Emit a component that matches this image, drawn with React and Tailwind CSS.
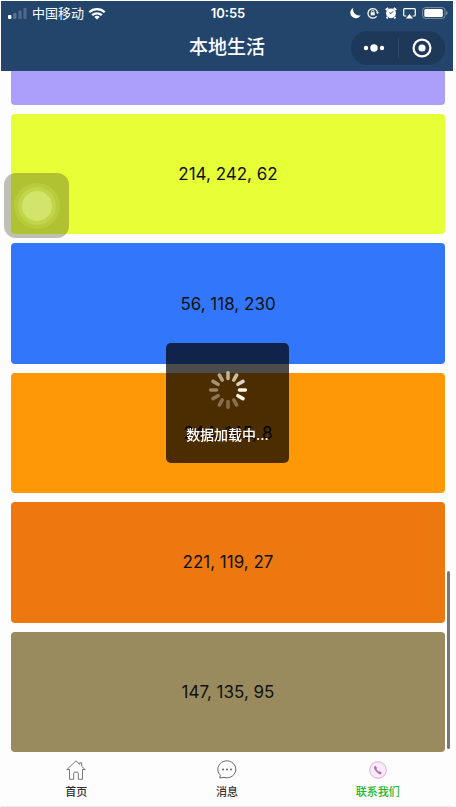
import React from "react";

const cards = [
  { label: "214, 242, 62", color: "bg-[#e7ff37]" },
  { label: "56, 118, 230", color: "bg-[#3277fb]" },
  { label: "244, 145, 8", color: "bg-[#ff9806]" },
  { label: "221, 119, 27", color: "bg-[#ee7810]" },
  { label: "147, 135, 95", color: "bg-[#998b5d]" },
];

function StatusBar() {
  return (
    <div className="grid h-6 grid-cols-3 items-center pl-[7px] pr-[5px] text-[13px] leading-6">
      <div className="flex items-center gap-1">
        <svg width="20" height="12" viewBox="0 0 20 12" fill="#fff" aria-hidden="true">
          <rect x="0" y="8" width="3.4" height="4" rx="1" />
          <rect x="5.2" y="6" width="3.2" height="6" rx="1" opacity=".25" />
          <rect x="10.4" y="3.5" width="3.2" height="8.500" rx="1" opacity=".2" />
          <rect x="15.400" y="1" width="3.2" height="11" rx="1" opacity=".2" />
        </svg>
        <span>中国移动</span>
        <svg width="18" height="13" viewBox="0 0 18 13" fill="none" stroke="#fff" strokeWidth="2.300" aria-hidden="true">
          <path d="M1.300 5.200a11 11 0 0 1 15.400 0" />
          <path d="M4.200 8.200a7 7 0 0 1 9.600 0" />
          <path d="M9 12.600 6.300 10a4 4 0 0 1 5.400 0Z" fill="#fff" stroke="none" />
        </svg>
      </div>
      <span className="text-center font-semibold">10:55</span>
      <div className="flex items-center justify-end gap-[6px]">
        <svg width="11" height="12" viewBox="0 0 11 12" fill="#fff" aria-hidden="true">
          <path d="M3.300.8A6 6 0 0 0 10.700 8.200 5.500 5.500 0 1 1 3.300.8Z" />
        </svg>
        <svg width="12" height="12" viewBox="0 0 12 12" fill="none" stroke="#fff" strokeWidth="1.200" aria-hidden="true">
          <path d="M9.600 9.300A4.800 4.800 0 1 1 10.600 6" />
          <path d="m9 5.200 1.600 1.900L12 5.200Z" fill="#fff" stroke="none" />
          <rect x="3.700" y="5.300" width="4" height="3" fill="#fff" stroke="none" />
          <path d="M4.500 5.500V4.500a1.200 1.200 0 0 1 2.400 0v1" strokeWidth="1" />
        </svg>
        <svg width="12" height="12" viewBox="0 0 12 12" aria-hidden="true">
          <circle cx="6" cy="6.300" r="4.900" fill="#fff" />
          <path d="M.8 3 3.200.9M11.200 3 8.800.9M2.600 10.200l-1 1.200M9.400 10.200l1 1.200" stroke="#fff" strokeWidth="1.900" />
          <path d="M8 4.300 6 6.700 4.300 5.600" fill="none" stroke="#23456b" strokeWidth="1" />
        </svg>
        <svg width="13" height="11" viewBox="0 0 13 11" fill="none" stroke="#fff" strokeWidth="1.200" aria-hidden="true">
          <path d="M3.400 8H1.700a1 1 0 0 1-1-1V1.700a1 1 0 0 1 1-1h9.600a1 1 0 0 1 1 1V7a1 1 0 0 1-1 1H9.600" />
          <path d="m6.500 6 3.500 4.600H3Z" fill="#fff" stroke="none" />
        </svg>
        <svg width="26" height="12" viewBox="0 0 26 12" aria-hidden="true">
          <rect x=".6" y=".6" width="22.500" height="10.800" rx="3" fill="none" stroke="#fff" strokeOpacity=".4" />
          <rect x="2.300" y="2" width="18.500" height="8" rx="1.500" fill="#fff" />
          <path d="M24.300 4v4q1.200-.7 1.200-2t-1.200-2Z" fill="#fff" opacity=".5" />
        </svg>
      </div>
    </div>
  );
}

function TitleBar() {
  return (
    <div className="grid h-[46px] grid-cols-[1fr_auto_1fr] items-center px-2">
      <h1 className="col-start-2 pb-px text-[19px] font-medium leading-6">本地生活</h1>
      <div className="flex h-[34px] w-[94px] items-center justify-self-end rounded-full bg-[#1d3858] ring-1 ring-inset ring-[#1e3b5f]">
        <button type="button" aria-label="更多" className="flex flex-1 justify-center">
          <svg width="22" height="10" viewBox="0 0 22 10" fill="#fff" aria-hidden="true">
            <circle cx="3" cy="5" r="2.200" />
            <circle cx="11" cy="5" r="3.700" />
            <circle cx="19" cy="5" r="2.200" />
          </svg>
        </button>
        <span className="h-5 w-px bg-[#2c4a6c]" />
        <button type="button" aria-label="关闭" className="flex flex-1 justify-center">
          <svg width="20" height="20" viewBox="0 0 20 20" aria-hidden="true">
            <circle cx="10" cy="10" r="8.400" fill="none" stroke="#fff" strokeWidth="2.300" />
            <circle cx="10" cy="10" r="3.600" fill="#fff" />
          </svg>
        </button>
      </div>
    </div>
  );
}

function HomeIcon() {
  return (
    <svg width="20" height="20" viewBox="0 0 20 20" fill="none" stroke="#777" strokeWidth="1" strokeLinejoin="round" strokeLinecap="round" aria-hidden="true">
      <path d="m1 9.500 9-8.700 3.700 3.500V2.800h2v3.500L19 9.500M1 9.500h2.500v9.800h4.200v-6q0-1.200 1.100-1.200h2.400q1.100 0 1.100 1.200v6h4.200V9.500H19" />
    </svg>
  );
}

function MessageIcon() {
  return (
    <svg width="20" height="20" viewBox="0 0 20 20" fill="none" stroke="#666" strokeWidth="1" aria-hidden="true">
      <path d="M3.300 15.200A9 8.500 0 1 1 7 17.400M3.300 15.200 2.800 18l4.200-.6" />
      <g fill="#555" stroke="none">
        <circle cx="6" cy="9.500" r=".9" />
        <circle cx="10" cy="9.500" r=".9" />
        <circle cx="14" cy="9.500" r=".9" />
      </g>
    </svg>
  );
}

function PhoneIcon() {
  return (
    <svg width="20" height="20" viewBox="0 0 20 20" aria-hidden="true">
      <circle cx="10" cy="10" r="8.300" fill="#fbeafa" stroke="#dcaedb" />
      <path d="M6.700 6.200 7.500 5.800 9 8.100 8.400 9.100q.9 1.800 2.500 2.700l1-.6 1.900 1.500-.6 1.300q-1.500.8-3.600-1Q6.300 10.300 6 8 6 6.800 6.700 6.200Z" fill="#ad70ae" />
    </svg>
  );
}

const tabs = [
  { label: "首页", Icon: HomeIcon, color: "text-[#333]" },
  { label: "消息", Icon: MessageIcon, color: "text-[#333]" },
  { label: "联系我们", Icon: PhoneIcon, color: "text-[#22b52e]" },
];

const spokeOpacity = [0.65, 0.7, 0.82, 1, 1, 0.32, 0.3, 0.32, 0.36, 0.42, 0.5, 0.58];

function LoadingToast() {
  return (
    <div className="fixed inset-0 flex items-center justify-center pb-px pr-px">
      <div role="status" className="flex h-[120px] w-[123px] flex-col items-center gap-[15px] rounded-[5px] bg-black/70 pt-[27px] text-white">
        <svg width="40" height="40" viewBox="-20 -20 40 40" stroke="#fff8e8" strokeWidth="3.600" strokeLinecap="round" aria-hidden="true">
          {spokeOpacity.map((opacity, i) => (
            <line key={i} x1="0" y1="-11.500" x2="0" y2="-17.300" opacity={opacity} transform={`rotate(${i * 30})`} />
          ))}
        </svg>
        <span className="text-sm font-medium leading-5">数据加载中...</span>
      </div>
    </div>
  );
}

export default function App() {
  return (
    <div className="flex min-h-screen flex-col bg-[#fdfdfd] pl-px pr-[3px] pt-px font-[Inter,'Noto_Sans_CJK_SC',sans-serif]">
      <header className="h-[70px] bg-[#23456b] text-white">
        <StatusBar />
        <TitleBar />
      </header>

      <main className="relative flex flex-1 flex-col gap-[9px] pl-[10px] pr-2">
        <div className="h-[34px] rounded-b bg-[#ab9ffb]" />
        {cards.map((card) => (
          <section key={card.label} className={`flex min-h-[120px] flex-1 items-center justify-center rounded ${card.color}`}>
            <p className="text-[17px] leading-6 text-[#111]">{card.label}</p>
          </section>
        ))}
        <div className="absolute bottom-[3px] right-[3px] h-[178px] w-[3px] rounded-full bg-[#777]" />
      </main>

      <nav className="grid h-[55px] grid-cols-3 border-b border-[#eee] pt-2">
        {tabs.map(({ label, Icon, color }) => (
          <a key={label} href="#" className={`flex flex-col items-center gap-1 text-[11px] font-medium leading-4 ${color}`}>
            <Icon />
            {label}
          </a>
        ))}
      </nav>

      <LoadingToast />

      <button type="button" aria-label="辅助触控" className="fixed left-1 top-[173px] flex size-[65px] items-center justify-center rounded-xl bg-[#4a4d28]/35">
        <span className="flex size-[46px] items-center justify-center rounded-full bg-[#e7ff80]/15">
          <span className="flex size-[38px] items-center justify-center rounded-full bg-[#e7ff80]/20">
            <span className="size-[30px] rounded-full bg-[#f4ffb0]/35" />
          </span>
        </span>
      </button>
    </div>
  );
}
